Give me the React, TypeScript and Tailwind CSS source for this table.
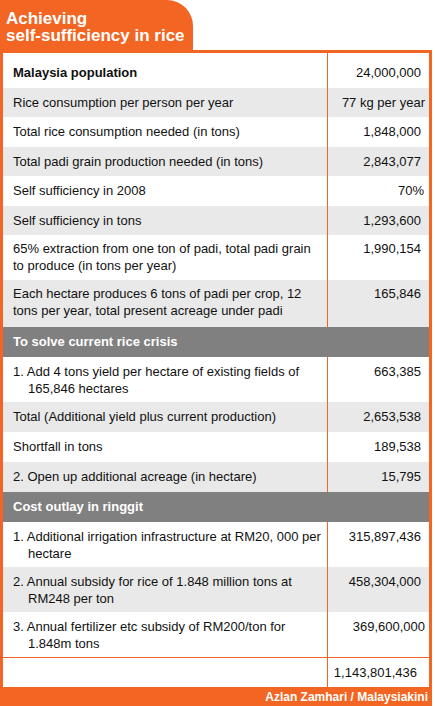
import React from "react";

type Row = {
  label: string;
  value?: string;
  kind?: "head" | "bold" | "total";
  shade?: boolean;
  h: string;
  indent?: boolean;
  pr?: string;
};

const rows: Row[] = [
  { label: "Malaysia population", value: "24,000,000", kind: "bold", h: "h-[35px] pt-[11px]" },
  { label: "Rice consumption per person per year", value: "77 kg per year", shade: true, h: "h-[29px] pt-[6px]", pr: "pr-[4px]" },
  { label: "Total rice consumption needed (in tons)", value: "1,848,000", h: "h-[30px] pt-[6px]" },
  { label: "Total padi grain production needed (in tons)", value: "2,843,077", shade: true, h: "h-[29px] pt-[6px]" },
  { label: "Self sufficiency in 2008", value: "70%", h: "h-[30px] pt-[6px]", pr: "pr-[5px]" },
  { label: "Self sufficiency in tons", value: "1,293,600", shade: true, h: "h-[29px] pt-[6px]" },
  { label: "65% extraction from one ton of padi, total padi grain to produce (in tons per year)", value: "1,990,154", h: "h-[45px] pt-[5px]" },
  { label: "Each hectare produces 6 tons of padi per crop, 12 tons per year, total present acreage under padi", value: "165,846", shade: true, h: "h-[47px] pt-[5px]" },
  { label: "To solve current rice crisis", kind: "head", h: "h-[30px] pt-[6px]" },
  { label: "1. Add 4 tons yield per hectare of existing fields of 165,846 hectares", value: "663,385", indent: true, h: "h-[45px] pt-[6px]" },
  { label: "Total (Additional yield plus current production)", value: "2,653,538", shade: true, h: "h-[30px] pt-[6px]" },
  { label: "Shortfall in tons", value: "189,538", h: "h-[30px] pt-[6px]" },
  { label: "2. Open up additional acreage (in hectare)", value: "15,795", shade: true, h: "h-[30px] pt-[6px]" },
  { label: "Cost outlay in ringgit", kind: "head", h: "h-[30px] pt-[6px]" },
  { label: "1. Additional irrigation infrastructure at RM20, 000 per hectare", value: "315,897,436", indent: true, h: "h-[45px] pt-[6px]" },
  { label: "2. Annual subsidy for rice of 1.848 million tons at RM248 per ton", value: "458,304,000", indent: true, shade: true, h: "h-[45px] pt-[6px]" },
  { label: "3. Annual fertilizer etc subsidy of RM200/ton for 1.848m tons", value: "369,600,000", indent: true, h: "h-[45px] pt-[6px]", pr: "pr-[4px]" },
  { label: "", value: "1,143,801,436", kind: "total", h: "h-[29px] pt-[6px]", pr: "pr-[12px]" },
];

export default function App() {
  return (
    <div className="w-[435px] h-[706px] bg-white font-['Liberation_Sans',Arial,sans-serif] text-[13px] leading-[17px] text-[#111]">
      <div className="w-[432px]">
        {/* title tab */}
        <div className="w-[193px] h-[50px] bg-[#f26522] rounded-tr-[26px] pl-[6px] pt-[10px] text-[17px] leading-[17px] font-bold text-white">
          Achieving
          <br />
          self-sufficiency in rice
        </div>

        <div className="border-x-[3px] border-t-[3px] border-[#f26522]">
          {rows.map((r, i) =>
            r.kind === "head" ? (
              <div key={i} className={`bg-[#808080] text-white font-bold pl-[10px] ${r.h}`}>
                {r.label}
              </div>
            ) : (
              <div
                key={i}
                className={`flex ${r.shade ? "bg-[#e9e9e9]" : "bg-white"} ${r.kind === "total" ? "border-t border-[#f26522]" : ""}`}
              >
                <div
                  className={`w-[325px] shrink-0 border-r border-[#f26522] pl-[10px] pr-[6px] ${r.h} ${r.kind === "bold" ? "font-bold" : ""}`}
                >
                  <div className={r.indent ? "pl-[15px] -indent-[15px]" : ""}>{r.label}</div>
                </div>
                <div className={`flex-1 text-right ${r.h} ${r.pr ?? "pr-[8px]"}`}>{r.value}</div>
              </div>
            )
          )}
        </div>

        <div className="h-[20px] bg-[#f26522] text-white font-bold text-[12px] leading-[20px] text-right pr-[4px]">
          Azlan Zamhari / Malaysiakini
        </div>
      </div>
    </div>
  );
}
